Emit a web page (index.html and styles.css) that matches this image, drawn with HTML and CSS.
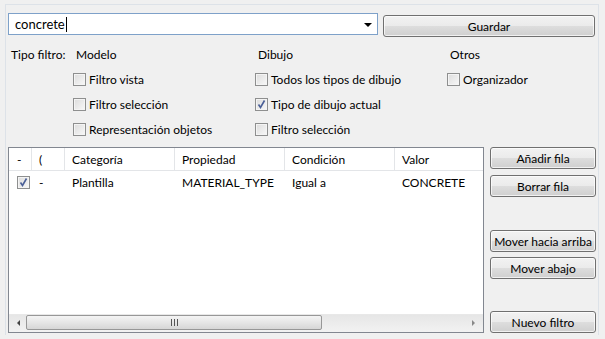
FILE: index.html
```html
<!DOCTYPE html>
<html lang="es">
<head>
  <meta charset="UTF-8">
  <title>Filtro</title>
  <link rel="stylesheet" href="styles.css">
</head>
<body>
  <div class="panel">
    <div class="top-row">
      <div class="combo">
        <span class="combo-text">concrete</span><span class="caret"></span>
        <span class="combo-arrow"></span>
      </div>
      <button class="btn btn-save">Guardar</button>
    </div>

    <div class="filters">
      <div class="f-label">Tipo filtro:</div>
      <div class="f-head">Modelo</div>
      <div class="f-head">Dibujo</div>
      <div class="f-head">Otros</div>

      <div></div>
      <label class="chk"><span class="cb"></span>Filtro vista</label>
      <label class="chk"><span class="cb"></span>Todos los tipos de dibujo</label>
      <label class="chk"><span class="cb"></span>Organizador</label>

      <div></div>
      <label class="chk"><span class="cb"></span>Filtro selección</label>
      <label class="chk"><span class="cb checked"><svg viewBox="0 0 11 11" width="11" height="11"><path d="M2.5 5.5 L4.5 8.5 L8.5 1.5" fill="none" stroke="#4a5f97" stroke-width="1.6"/></svg></span>Tipo de dibujo actual</label>
      <div></div>

      <div></div>
      <label class="chk"><span class="cb"></span>Representación objetos</label>
      <label class="chk"><span class="cb"></span>Filtro selección</label>
      <div></div>
    </div>

    <div class="bottom">
      <div class="grid">
        <div class="grid-body">
          <div class="row head">
            <div class="cell first">-</div>
            <div class="cell">(</div>
            <div class="cell">Categoría</div>
            <div class="cell">Propiedad</div>
            <div class="cell">Condición</div>
            <div class="cell">Valor</div>
          </div>
          <div class="row">
            <div class="cell first"><span class="cb checked"><svg viewBox="0 0 11 11" width="11" height="11"><path d="M2.5 5.5 L4.5 8.5 L8.5 1.5" fill="none" stroke="#4a5f97" stroke-width="1.6"/></svg></span></div>
            <div class="cell">-</div>
            <div class="cell">Plantilla</div>
            <div class="cell">MATERIAL_TYPE</div>
            <div class="cell">Igual a</div>
            <div class="cell">CONCRETE</div>
          </div>
        </div>
        <div class="hscroll">
          <span class="sb-arrow left"></span>
          <div class="sb-track">
            <div class="sb-thumb"><span class="grip"></span></div>
          </div>
          <span class="sb-arrow right"></span>
        </div>
      </div>

      <div class="side">
        <button class="btn">Añadir fila</button>
        <button class="btn">Borrar fila</button>
        <button class="btn btn-up">Mover hacia arriba</button>
        <button class="btn">Mover abajo</button>
        <button class="btn btn-new">Nuevo filtro</button>
      </div>
    </div>
  </div>
</body>
</html>
```

FILE: styles.css
```css
body {
  margin: 0;
  background: #f0f0f0;
  font-family: 'Lato', 'Open Sans', sans-serif;
  font-size: 12px;
  color: #000;
}

.panel {
  margin: 4px 6px 0 5px;
  height: 331px;
  box-sizing: border-box;
  border: 1px solid #dde2e8;
  border-bottom: none;
  padding: 8px 2px 0 2px;
}

.top-row {
  display: flex;
  align-items: flex-start;
  gap: 5px;
}

.combo {
  position: relative;
  width: 370px;
  height: 22px;
  box-sizing: border-box;
  border: 1px solid #7ea1c9;
  background: #fff;
  display: flex;
  align-items: center;
  padding-left: 6px;
  font-size: 13px;
}

.caret {
  display: inline-block;
  width: 1px;
  height: 15px;
  background: #000;
  margin-left: 1px;
}

.combo-arrow {
  position: absolute;
  right: 5px;
  top: 9px;
  width: 0;
  height: 0;
  border-left: 4px solid transparent;
  border-right: 4px solid transparent;
  border-top: 4px solid #000;
}

.btn {
  font-family: inherit;
  font-size: 12px;
  color: #000;
  height: 22px;
  padding: 0;
  border: 1px solid #707070;
  border-radius: 3px;
  background: linear-gradient(#f2f2f2 0%, #ebebeb 48%, #dddddd 52%, #cfcfcf 100%);
  box-shadow: inset 0 0 0 1px rgba(255, 255, 255, 0.7);
}

.btn-save {
  width: 212px;
  margin-top: 2px;
}

.filters {
  display: grid;
  grid-template-columns: 65px 182px 192px 1fr;
  grid-auto-rows: 25px;
  margin-top: 5px;
}

.f-label,
.f-head {
  padding-left: 3px;
  line-height: 25px;
}

.chk {
  display: flex;
  align-items: center;
  gap: 3px;
  height: 25px;
}

.cb {
  display: inline-flex;
  align-items: center;
  justify-content: center;
  width: 13px;
  height: 13px;
  box-sizing: border-box;
  border: 1px solid #8e8f8f;
  background: linear-gradient(135deg, #dcdcdc, #f8f8f8);
  box-shadow: inset 0 0 0 1px #f4f4f4;
}

.cb svg {
  display: block;
}

.bottom {
  display: flex;
  gap: 6px;
  margin-top: 5px;
}

.grid {
  width: 476px;
  height: 186px;
  box-sizing: border-box;
  border: 1px solid #828790;
  background: #fff;
  display: flex;
  flex-direction: column;
}

.grid-body {
  flex: 1;
  overflow: hidden;
}

.row {
  display: grid;
  grid-template-columns: 23px 33px 110px 110px 110px 110px;
  height: 22px;
  align-items: center;
  white-space: nowrap;
}

.row.head {
  border-bottom: 1px solid #e3e5e8;
}

.row.head .cell {
  height: 22px;
  border-right: 1px solid #e3e5e8;
}

.row .cell {
  padding-left: 7px;
  box-sizing: border-box;
  display: flex;
  align-items: center;
}

.row .cell.first {
  padding-left: 8px;
}

.hscroll {
  height: 17px;
  display: flex;
  align-items: center;
  background: linear-gradient(#e6e6e6, #f2f2f2);
  border-top: 1px solid #e8e8e8;
}

.sb-arrow {
  width: 17px;
  height: 17px;
  position: relative;
}

.sb-arrow.left::after,
.sb-arrow.right::after {
  content: "";
  position: absolute;
  top: 5px;
  border-top: 3px solid transparent;
  border-bottom: 3px solid transparent;
}

.sb-arrow.left::after {
  left: 8px;
  border-right: 3px solid #444;
}

.sb-arrow.right::after {
  left: 6px;
  border-left: 3px solid #888;
}

.sb-track {
  flex: 1;
  height: 17px;
}

.sb-thumb {
  width: 296px;
  height: 15px;
  box-sizing: border-box;
  border: 1px solid #979797;
  border-radius: 2px;
  background: linear-gradient(#f4f4f4, #e6e6e6 50%, #d6d6d6);
  display: flex;
  align-items: center;
  justify-content: center;
}

.grip {
  width: 7px;
  height: 7px;
  background: repeating-linear-gradient(90deg, #555 0 1px, transparent 1px 3px);
}

.side {
  width: 106px;
  display: flex;
  flex-direction: column;
}

.side .btn {
  width: 106px;
  margin-bottom: 6px;
}

.side .btn-up {
  margin-top: 27px;
  margin-bottom: 5px;
}

.side .btn-new {
  margin-top: 26px;
}
```
